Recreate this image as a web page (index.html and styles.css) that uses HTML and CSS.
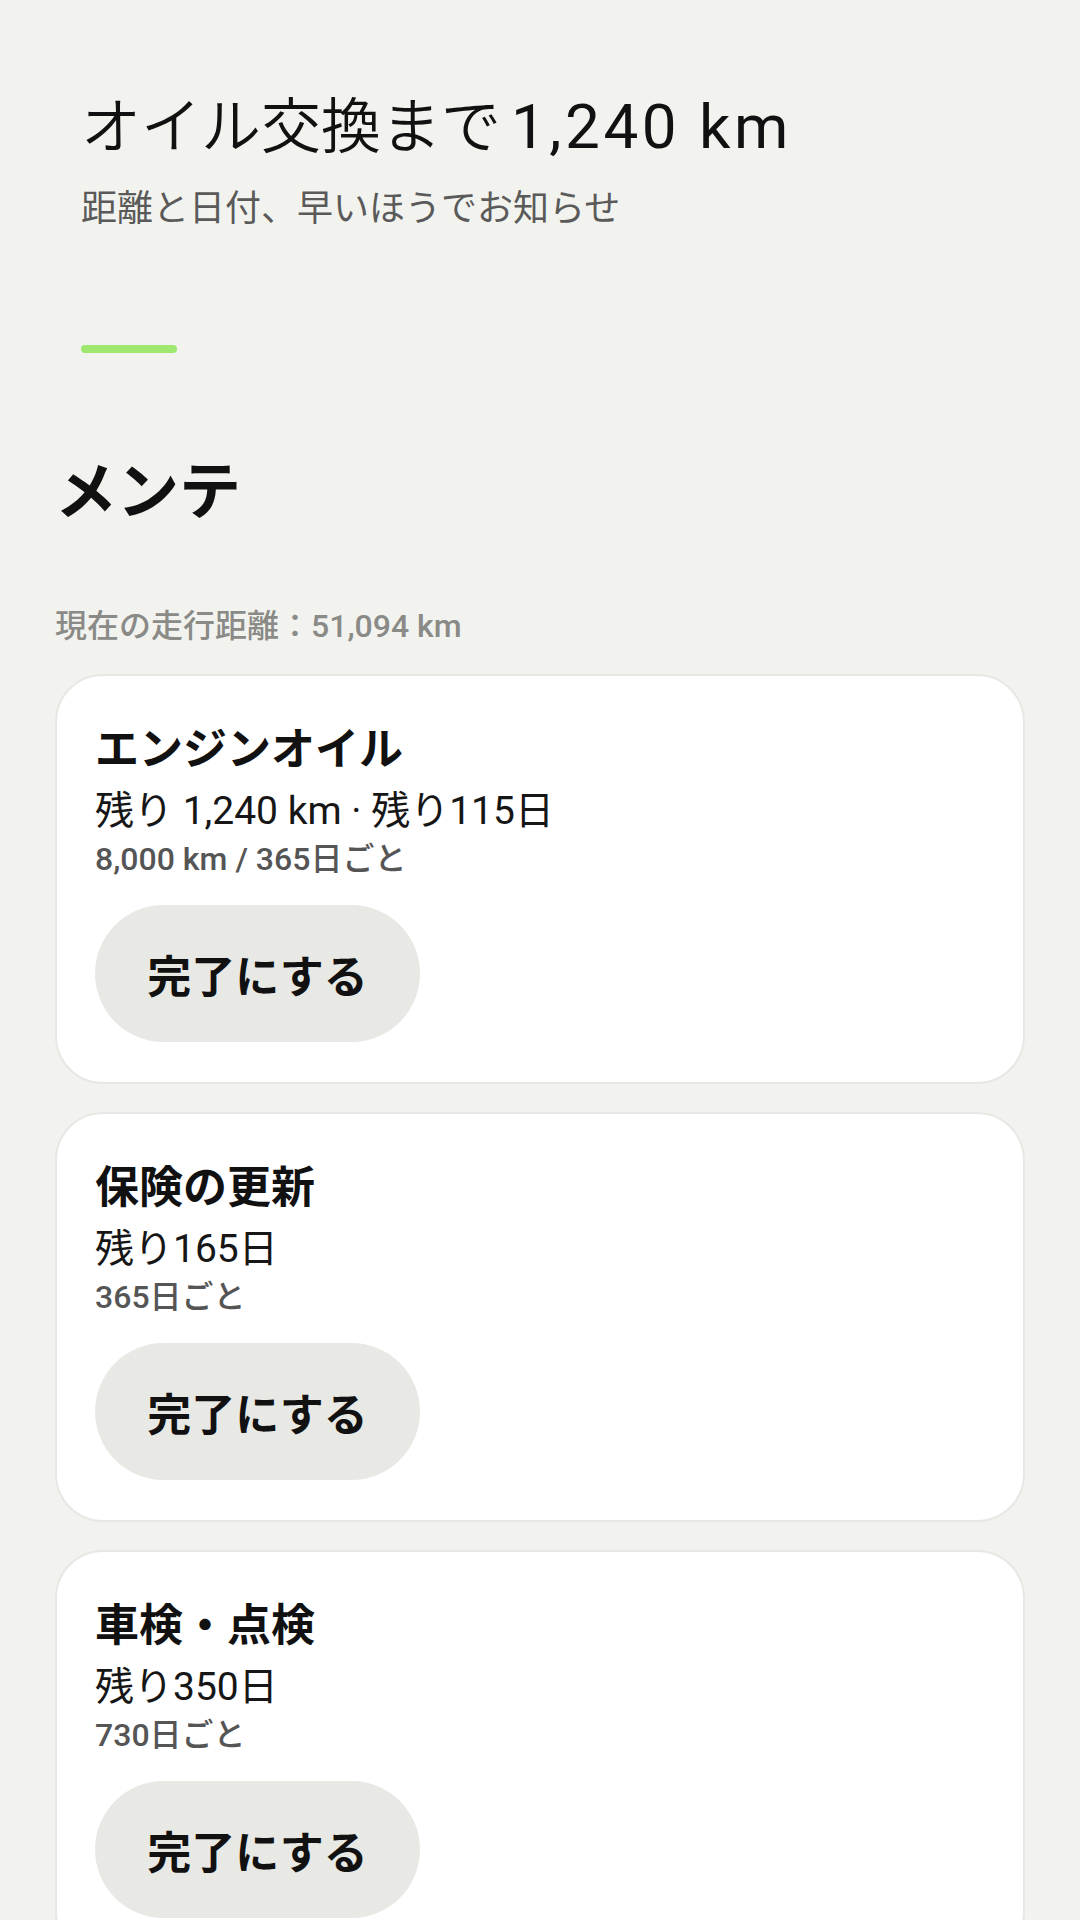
FILE: index.html
```html
<!DOCTYPE html>
<html lang="ja">
<head>
    <meta charset="UTF-8">
    <meta name="viewport" content="width=device-width, initial-scale=1.0">
    <title>メンテ</title>
    <link rel="stylesheet" href="styles.css">
</head>
<body>
    <header class="summary">
        <h1 class="summary-title">オイル交換まで<span class="summary-num">1,240 km</span></h1>
        <p class="summary-sub">距離と日付、早いほうでお知らせ</p>
        <div class="summary-bar"></div>
    </header>

    <h2 class="section-title">メンテ</h2>
    <p class="odometer">現在の走行距離：51,094 km</p>

    <div class="item-list">
        <div class="item-card">
            <h3 class="item-name">エンジンオイル</h3>
            <p class="item-left">残り 1,240 km · 残り115日</p>
            <p class="item-interval">8,000 km / 365日ごと</p>
            <button class="btn-done">完了にする</button>
        </div>

        <div class="item-card">
            <h3 class="item-name">保険の更新</h3>
            <p class="item-left">残り165日</p>
            <p class="item-interval">365日ごと</p>
            <button class="btn-done">完了にする</button>
        </div>

        <div class="item-card">
            <h3 class="item-name">車検・点検</h3>
            <p class="item-left">残り350日</p>
            <p class="item-interval">730日ごと</p>
            <button class="btn-done">完了にする</button>
        </div>
    </div>
</body>
</html>
```

FILE: styles.css
```css
/* Maintenance screen */
body {
    font-family: Roboto, "Noto Sans CJK JP", sans-serif;
    background-color: #f2f3ef;
    color: #141414;
    margin: 0;
    padding: 0 55px 60px;
}

h1, h2, h3, p {
    margin: 0;
}

/* Top summary */
.summary {
    padding: 90px 0 0 26px;
}

.summary-title {
    font-size: 60px;
    font-weight: 350;
    line-height: 74px;
    color: #111;
}

.summary-num {
    margin-left: 10px;
    font-size: 62px;
    font-weight: 400;
    letter-spacing: 3.5px;
}

.summary-sub {
    margin-top: 20px;
    font-size: 36px;
    line-height: 48px;
    color: #5a5a5a;
}

.summary-bar {
    margin-top: 112px;
    width: 96px;
    height: 8px;
    border-radius: 4px;
    background-color: #9fe870;
}

/* Section heading */
.section-title {
    margin-top: 103px;
    font-size: 62px;
    font-weight: 700;
    line-height: 74px;
    color: #111;
}

.odometer {
    margin-top: 76px;
    font-size: 32px;
    font-weight: 500;
    line-height: 40px;
    color: #8a8a87;
}

/* Cards */
.item-list {
    margin-top: 28px;
    display: flex;
    flex-direction: column;
    gap: 28px;
}

.item-card {
    background-color: #fff;
    border: 2px solid #e7e8e4;
    border-radius: 48px;
    padding: 46px 38px 40px;
}

.item-name {
    font-size: 44px;
    font-weight: 700;
    line-height: 56px;
    color: #111;
}

.item-left {
    margin-top: 8px;
    font-size: 39px;
    line-height: 50px;
    color: #161616;
}

.item-interval {
    margin-top: 3px;
    font-size: 32px;
    font-weight: 500;
    line-height: 40px;
    color: #555;
}

.btn-done {
    display: block;
    margin-top: 26px;
    width: 325px;
    height: 137px;
    border: none;
    border-radius: 69px;
    background-color: #e8e9e5;
    font-family: inherit;
    font-size: 44px;
    font-weight: 700;
    color: #111;
    cursor: pointer;
}
```
